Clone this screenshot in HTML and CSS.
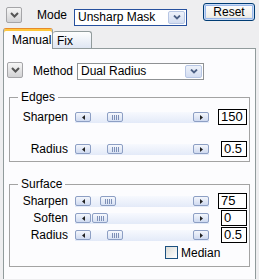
FILE: index.html
```html
<!DOCTYPE html>
<html lang="en">
<head>
    <meta charset="UTF-8">
    <meta name="viewport" content="width=device-width, initial-scale=1.0">
    <title>Unsharp Mask</title>
    <link rel="stylesheet" href="styles.css">
</head>
<body>
    <div class="top">
        <span class="toggle"><svg width="9" height="6" viewBox="0 0 9 6"><path d="M1 1l3.5 3.5L8 1" fill="none" stroke="#555" stroke-width="2"/></svg></span>
        <span class="mode-lbl">Mode</span>
        <div class="combo mode-combo">
            <span class="combo-text">Unsharp Mask</span>
            <span class="drop"><svg width="8" height="5" viewBox="0 0 8 5"><path d="M1 0.5l3 3 3-3" fill="none" stroke="#4d6185" stroke-width="1.8"/></svg></span>
        </div>
        <button class="reset">Reset</button>
    </div>

    <div class="tabs">
        <div class="tab active">Manual</div>
        <div class="tab">Fix</div>
    </div>

    <div class="panel">
        <div class="method-row">
            <span class="toggle"><svg width="9" height="6" viewBox="0 0 9 6"><path d="M1 1l3.5 3.5L8 1" fill="none" stroke="#555" stroke-width="2"/></svg></span>
            <span class="method-lbl">Method</span>
            <div class="combo method-combo">
                <span class="combo-text">Dual Radius</span>
                <span class="drop"><svg width="8" height="5" viewBox="0 0 8 5"><path d="M1 0.5l3 3 3-3" fill="none" stroke="#4d6185" stroke-width="1.8"/></svg></span>
            </div>
        </div>

        <fieldset class="group edges">
            <legend>Edges</legend>
            <div class="rows">
                <span class="lbl">Sharpen</span>
                <div class="scroll">
                    <span class="sbtn"><svg width="5" height="5" viewBox="0 0 5 5"><path d="M4 0v5L1 2.5z" fill="#222"/></svg></span>
                    <span class="track"><span class="thumb" style="margin-left: 16px"><i></i><i></i><i></i><i></i></span></span>
                    <span class="sbtn"><svg width="5" height="5" viewBox="0 0 5 5"><path d="M1 0v5L4 2.5z" fill="#222"/></svg></span>
                </div>
                <span class="val wide">150</span>

                <span class="lbl">Radius</span>
                <div class="scroll">
                    <span class="sbtn"><svg width="5" height="5" viewBox="0 0 5 5"><path d="M4 0v5L1 2.5z" fill="#222"/></svg></span>
                    <span class="track"><span class="thumb" style="margin-left: 16px"><i></i><i></i><i></i><i></i></span></span>
                    <span class="sbtn"><svg width="5" height="5" viewBox="0 0 5 5"><path d="M1 0v5L4 2.5z" fill="#222"/></svg></span>
                </div>
                <span class="val">0.5</span>
            </div>
        </fieldset>

        <fieldset class="group surface">
            <legend>Surface</legend>
            <div class="rows">
                <span class="lbl">Sharpen</span>
                <div class="scroll">
                    <span class="sbtn"><svg width="5" height="5" viewBox="0 0 5 5"><path d="M4 0v5L1 2.5z" fill="#222"/></svg></span>
                    <span class="track"><span class="thumb" style="margin-left: 9px"><i></i><i></i><i></i><i></i></span></span>
                    <span class="sbtn"><svg width="5" height="5" viewBox="0 0 5 5"><path d="M1 0v5L4 2.5z" fill="#222"/></svg></span>
                </div>
                <span class="val wide">75</span>

                <span class="lbl">Soften</span>
                <div class="scroll">
                    <span class="sbtn"><svg width="5" height="5" viewBox="0 0 5 5"><path d="M4 0v5L1 2.5z" fill="#222"/></svg></span>
                    <span class="track"><span class="thumb" style="margin-left: 1px"><i></i><i></i><i></i><i></i></span></span>
                    <span class="sbtn"><svg width="5" height="5" viewBox="0 0 5 5"><path d="M1 0v5L4 2.5z" fill="#222"/></svg></span>
                </div>
                <span class="val">0</span>

                <span class="lbl">Radius</span>
                <div class="scroll">
                    <span class="sbtn"><svg width="5" height="5" viewBox="0 0 5 5"><path d="M4 0v5L1 2.5z" fill="#222"/></svg></span>
                    <span class="track"><span class="thumb" style="margin-left: 16px"><i></i><i></i><i></i><i></i></span></span>
                    <span class="sbtn"><svg width="5" height="5" viewBox="0 0 5 5"><path d="M1 0v5L4 2.5z" fill="#222"/></svg></span>
                </div>
                <span class="val">0.5</span>

                <label class="check"><span class="box"></span>Median</label>
            </div>
        </fieldset>
    </div>
</body>
</html>
```

FILE: styles.css
```css
body {
    margin: 0;
    width: 259px;
    height: 280px;
    overflow: hidden;
    background-color: #eeeef0;
    font-family: "Liberation Sans", Arial, sans-serif;
    font-size: 12px;
    color: #000;
}

.top {
    display: flex;
    align-items: flex-start;
    height: 29px;
    padding-left: 6px;
}

.toggle {
    width: 14px;
    height: 14px;
    border: 1px solid #a5a5a8;
    border-radius: 2px;
    background: linear-gradient(#f6f6f6, #d2d2d4);
    display: flex;
    align-items: center;
    justify-content: center;
    flex: none;
}

.top .toggle {
    margin-top: 7px;
}

.mode-lbl {
    width: 37px;
    margin-left: 15px;
    margin-top: 8px;
    line-height: 15px;
}

.combo {
    display: flex;
    align-items: stretch;
    background-color: #fff;
    box-sizing: border-box;
}

.combo-text {
    flex: 1;
    padding-left: 3px;
    line-height: 15px;
    white-space: nowrap;
}

.drop {
    width: 15px;
    margin: 1px;
    border: 1px solid #b7c6e4;
    border-radius: 2px;
    background: linear-gradient(#eef2fa, #d3ddf1);
    display: flex;
    align-items: center;
    justify-content: center;
}

.mode-combo {
    width: 113px;
    height: 17px;
    margin-top: 9px;
    border: 1px solid #26509e;
}

.reset {
    width: 52px;
    height: 18px;
    margin-left: 16px;
    margin-top: 3px;
    padding: 0;
    border: 1px solid #003c74;
    border-radius: 3px;
    background: linear-gradient(#ffffff, #efeee9 80%, #d8d3c8);
    box-shadow: inset 0 0 0 1px #c9dbf6, inset 0 0 0 2px #9ab8ea;
    font-family: inherit;
    font-size: 12px;
    color: #000;
}

.tabs {
    display: flex;
    align-items: flex-end;
    margin-left: 3px;
    height: 20px;
    margin-bottom: -1px;
    position: relative;
}

.tab {
    box-sizing: border-box;
    border: 1px solid #919b9c;
    border-bottom: none;
    border-radius: 3px 3px 0 0;
    line-height: 14px;
}

.tab.active {
    width: 50px;
    height: 21px;
    padding: 4px 0 0 8px;
    background-color: #fcfcfe;
    border-top-color: #e68b2c;
    box-shadow: inset 0 2px #ffc73c;
}

.tab:not(.active) {
    width: 39px;
    height: 17px;
    margin-bottom: 1px;
    padding: 2px 0 0 4px;
    border-left: none;
    background: linear-gradient(#fefefe, #dfe6f3);
}

.panel {
    margin: 0 3px;
    height: 231px;
    box-sizing: border-box;
    border: 1px solid #919b9c;
    border-bottom: none;
    background-color: #fcfcfe;
}

.method-row {
    display: flex;
    align-items: flex-start;
    padding: 13px 0 0 3px;
}

.method-lbl {
    width: 44px;
    margin-left: 10px;
    margin-top: 2px;
    line-height: 14px;
}

.method-combo {
    width: 127px;
    height: 17px;
    margin-top: 1px;
    border: 1px solid #8f9294;
}

.group {
    margin: 10px 5px 0 5px;
    padding: 5px 1px 4px 8px;
    border: 1px solid #a3a3a3;
    min-width: 0;
}

.group legend {
    padding: 0 3px;
    line-height: 14px;
}

.surface {
    margin-top: 15px;
    padding-top: 2px;
    padding-bottom: 6px;
}

.rows {
    display: grid;
    grid-template-columns: 50px 134px 1fr;
    grid-auto-rows: 16px;
    column-gap: 7px;
    row-gap: 16px;
    align-items: center;
}

.surface .rows {
    row-gap: 1px;
}

.lbl {
    text-align: right;
    line-height: 14px;
    white-space: nowrap;
}

.scroll {
    display: flex;
    align-items: center;
    height: 11px;
    background: linear-gradient(#f7f9fe, #e3eaf8);
}

.sbtn {
    box-sizing: border-box;
    width: 16px;
    height: 10px;
    border: 1px solid #8d9fc4;
    border-radius: 2px;
    background: linear-gradient(#f3f6fc, #cfdaf0);
    display: flex;
    align-items: center;
    justify-content: center;
    flex: none;
}

.track {
    flex: 1;
    display: flex;
    align-items: center;
}

.thumb {
    box-sizing: border-box;
    width: 16px;
    height: 10px;
    border: 1px solid #8d9fc4;
    border-radius: 2px;
    background: linear-gradient(#f6f8fd, #d6e0f3);
    display: flex;
    align-items: center;
    justify-content: center;
    gap: 1px;
}

.thumb i {
    width: 1px;
    height: 5px;
    background-color: #7d8fb6;
}

.val {
    justify-self: end;
    box-sizing: border-box;
    width: 26px;
    height: 16px;
    margin-right: 1px;
    padding-left: 2px;
    border: 1px solid #000;
    background-color: #fff;
    font-size: 13px;
    line-height: 14px;
}

.val.wide {
    width: 29px;
}

.check {
    grid-column: 2 / 4;
    height: 14px;
    margin-left: 90px;
    display: flex;
    align-items: center;
    gap: 3px;
    margin-top: 1px;
}

.check .box {
    box-sizing: border-box;
    width: 13px;
    height: 13px;
    border: 1px solid #1c5180;
    background: linear-gradient(135deg, #dcdcd7, #ffffff);
}
```
